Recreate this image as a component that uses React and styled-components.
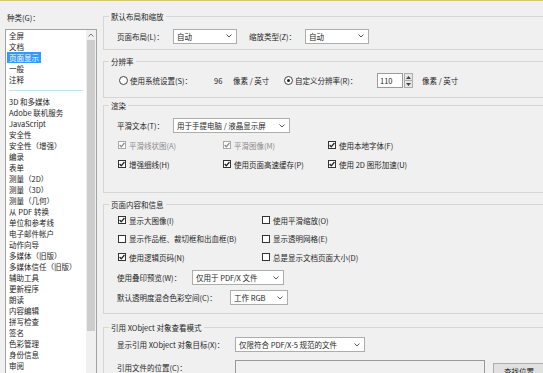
import React from 'react';
import styled, { createGlobalStyle } from 'styled-components';

const GlobalStyle = createGlobalStyle`
  html, body { margin: 0; padding: 0; background: #f0f0f0; overflow: hidden; }
  body {
    font-family: "Noto Sans CJK SC", "Noto Sans", sans-serif;
    font-size: 7.5px;
    color: #1e1e1e;
  }
`;

const Window = styled.div`
  width: 543px;
  height: 373px;
  box-sizing: border-box;
  border-top: 1px solid #d9c96c;
  display: flex;
  overflow: hidden;
  background: #f0f0f0;
`;

/* ---------- sidebar ---------- */
const Sidebar = styled.div`
  width: 103px;
  flex: none;
  display: flex;
  flex-direction: column;
  padding-left: 5px;
  box-sizing: border-box;
`;

const SideLabel = styled.div`
  height: 11px;
  line-height: 11px;
  margin: 11px 0 0 2px;
  white-space: nowrap;
`;

const ListBox = styled.div`
  margin-top: 6px;
  width: 92px;
  height: 380px;
  box-sizing: border-box;
  border: 1px solid #a3a3a3;
  background: #fff;
  display: flex;
  flex: none;
`;

const List = styled.div`
  flex: 1;
  min-width: 0;
  display: flex;
  flex-direction: column;
  align-items: flex-start;
  padding-left: 1px;
`;

const Item = styled.div`
  height: 11px;
  line-height: 11px;
  padding: 0 2px;
  white-space: nowrap;
  background: ${p => (p.$sel ? '#3399ff' : 'transparent')};
  color: ${p => (p.$sel ? '#fff' : '#1e1e1e')};
`;

const Sep = styled.div`
  height: 11px;
  align-self: stretch;
  display: flex;
  align-items: center;
  padding: 0 3px 0 2px;
  &::after {
    content: '';
    flex: 1;
    height: 1px;
    background: #c6e2f2;
  }
`;

const Scrollbar = styled.div`
  width: 10px;
  flex: none;
  background: #f0f0f0;
  display: flex;
  flex-direction: column;
  align-items: center;
`;

const ScrollArrow = styled.div`
  height: 10px;
  width: 10px;
  display: flex;
  align-items: center;
  justify-content: center;
`;

const Thumb = styled.div`
  width: 8px;
  height: 291px;
  background: #cdcdcd;
`;

/* ---------- main ---------- */
const Main = styled.div`
  flex: 1;
  min-width: 0;
  display: flex;
  flex-direction: column;
`;

const Group = styled.section`
  flex: none;
  width: 470px;
  height: ${p => p.$h}px;
  margin-top: ${p => p.$mt}px;
  box-sizing: border-box;
  border: 1px solid #d6d6d6;
  display: flex;
  flex-direction: column;
  padding-left: 13px;
`;

const Title = styled.div`
  width: fit-content;
  height: 11px;
  line-height: 11px;
  margin: -6px 0 0 -8px;
  padding: 0 2px;
  background: #f0f0f0;
  white-space: nowrap;
`;

const Row = styled.div`
  display: flex;
  align-items: ${p => (p.$top ? 'flex-start' : 'center')};
  height: ${p => p.$h}px;
  margin-top: ${p => p.$mt}px;
  flex: none;
`;

const Label = styled.div`
  width: ${p => p.$w}px;
  flex: none;
  white-space: nowrap;
  line-height: 11px;
  padding-top: ${p => p.$pt || 0}px;
  margin-left: ${p => p.$ml || 0}px;
`;

const Text = styled.div`
  width: ${p => p.$w}px;
  flex: none;
  white-space: nowrap;
  line-height: 11px;
`;

const SelectBox = styled.div`
  width: ${p => p.$w}px;
  height: 15px;
  flex: none;
  box-sizing: border-box;
  border: 1px solid #adadad;
  background: #fff;
  display: flex;
  align-items: center;
  justify-content: space-between;
  padding: 0 4px 0 3px;
  white-space: nowrap;
  line-height: 11px;
`;

const Grid = styled.div`
  display: grid;
  grid-template-columns: repeat(${p => p.$cols}, ${p => p.$cw}px);
  row-gap: ${p => p.$gap}px;
  margin-top: ${p => p.$mt}px;
  margin-left: 1px;
  flex: none;
`;

const CheckItem = styled.div`
  display: flex;
  align-items: center;
  height: 12px;
  line-height: 11px;
  white-space: nowrap;
  color: ${p => (p.$disabled ? '#8c8c8c' : '#1e1e1e')};
`;

const Box = styled.span`
  width: 8px;
  height: 8px;
  box-sizing: border-box;
  border: 1px solid ${p => (p.$disabled ? '#a8a8a8' : '#333')};
  background: #fff;
  margin-right: 3px;
  display: flex;
  align-items: center;
  justify-content: center;
  flex: none;
`;

const RadioItem = styled.div`
  width: ${p => p.$w}px;
  flex: none;
  display: flex;
  align-items: center;
  white-space: nowrap;
  line-height: 11px;
  margin-left: ${p => p.$ml || 0}px;
`;

const RadioCircle = styled.span`
  width: 9px;
  height: 9px;
  box-sizing: border-box;
  border-radius: 50%;
  border: 1px solid #444;
  background: #fff;
  margin-right: 2px;
  display: flex;
  align-items: center;
  justify-content: center;
  flex: none;
  &::after {
    content: '';
    width: 3px;
    height: 3px;
    border-radius: 50%;
    background: ${p => (p.$on ? '#222' : 'transparent')};
  }
`;

const NumInput = styled.div`
  width: 26px;
  height: 15px;
  box-sizing: border-box;
  border: 1px solid #9a9a9a;
  background: #fff;
  padding-left: 2px;
  line-height: 13px;
  flex: none;
`;

const Spin = styled.div`
  width: 9px;
  height: 15px;
  margin: 0 9px 0 1px;
  display: flex;
  flex-direction: column;
  flex: none;
  box-sizing: border-box;
  border: 1px solid #adadad;
  background: #e6e6e6;
`;

const SpinHalf = styled.div`
  flex: 1;
  display: flex;
  align-items: center;
  justify-content: center;
  border-top: ${p => (p.$down ? '1px solid #adadad' : 'none')};
`;

const TextField = styled.div`
  width: ${p => p.$w}px;
  height: 18px;
  box-sizing: border-box;
  border: 1px solid #9a9a9a;
  border-bottom: none;
  background: #f0f0f0;
  flex: none;
`;

const Button = styled.div`
  margin: 3px 0 0 8px;
  width: 62px;
  height: 16px;
  box-sizing: border-box;
  border: 1px solid #adadad;
  border-bottom: none;
  background: #e1e1e1;
  display: flex;
  align-items: center;
  justify-content: flex-start;
  flex: none;
  white-space: nowrap;
  line-height: 11px;
  padding-left: 10px;
`;

/* ---------- small drawings ---------- */
const Chevron = () => (
  <svg width="6" height="4" viewBox="0 0 6 4">
    <polyline points="0.5,0.5 3,3 5.5,0.5" fill="none" stroke="#555" strokeWidth="1" />
  </svg>
);

const UpChevron = () => (
  <svg width="6" height="4" viewBox="0 0 6 4">
    <polyline points="0.5,3.5 3,1 5.5,3.5" fill="none" stroke="#777" strokeWidth="1" />
  </svg>
);

const Tri = ({ down }) => (
  <svg width="5" height="3" viewBox="0 0 5 3">
    {down ? <polygon points="0,0 5,0 2.5,3" fill="#444" /> : <polygon points="0,3 5,3 2.5,0" fill="#444" />}
  </svg>
);

const CheckMark = ({ disabled }) => (
  <svg width="6" height="6" viewBox="0 0 6 6">
    <polyline points="0.6,3 2.3,4.8 5.4,1" fill="none" stroke={disabled ? '#8c8c8c' : '#222'} strokeWidth="1.3" />
  </svg>
);

const Check = ({ label, checked, disabled }) => (
  <CheckItem $disabled={disabled}>
    <Box $disabled={disabled}>{checked && <CheckMark disabled={disabled} />}</Box>
    {label}
  </CheckItem>
);

const Select = ({ w, children }) => (
  <SelectBox $w={w}>
    <span>{children}</span>
    <Chevron />
  </SelectBox>
);

const top = ['全屏', '文档', '页面显示', '一般', '注释'];
const rest = [
  '3D 和多媒体', 'Adobe 联机服务', 'JavaScript', '安全性', '安全性（增强）', '编录', '表单',
  '测量（2D）', '测量（3D）', '测量（几何）', '从 PDF 转换', '单位和参考线', '电子邮件帐户',
  '动作向导', '多媒体（旧版）', '多媒体信任（旧版）', '辅助工具', '更新程序', '朗读',
  '内容编辑', '拼写检查', '签名', '色彩管理', '身份信息', '审阅',
];

export default function App() {
  return (
    <>
      <GlobalStyle />
      <Window>
        <Sidebar>
          <SideLabel>种类(G)：</SideLabel>
          <ListBox>
            <List>
              {top.map(t => (
                <Item key={t} $sel={t === '页面显示'}>{t}</Item>
              ))}
              <Sep />
              {rest.map(t => (
                <Item key={t}>{t}</Item>
              ))}
            </List>
            <Scrollbar>
              <ScrollArrow><UpChevron /></ScrollArrow>
              <Thumb />
            </Scrollbar>
          </ListBox>
        </Sidebar>

        <Main>
          <Group $h={34} $mt={15}>
            <Title>默认布局和缩放</Title>
            <Row $h={16} $mt={6}>
              <Label $w={56}>页面布局(L)：</Label>
              <Select w={64}>自动</Select>
              <Label $w={56} $ml={12}>缩放类型(Z)：</Label>
              <Select w={64}>自动</Select>
            </Row>
          </Group>

          <Group $h={37} $mt={11}>
            <Title>分辨率</Title>
            <Row $h={15} $mt={6}>
              <RadioItem $w={95} $ml={2}><RadioCircle />使用系统设置(S)：</RadioItem>
              <Text $w={19}>96</Text>
              <Text $w={51}>像素 / 英寸</Text>
              <RadioItem $w={93}><RadioCircle $on />自定义分辨率(R)：</RadioItem>
              <NumInput>110</NumInput>
              <Spin>
                <SpinHalf><Tri /></SpinHalf>
                <SpinHalf $down><Tri down /></SpinHalf>
              </Spin>
              <Text $w={60}>像素 / 英寸</Text>
            </Row>
          </Group>

          <Group $h={88} $mt={7}>
            <Title>渲染</Title>
            <Row $h={15} $mt={7}>
              <Label $w={56}>平滑文本(T)：</Label>
              <Select w={117}>用于手提电脑 / 液晶显示屏</Select>
            </Row>
            <Grid $cols={3} $cw={105} $gap={7} $mt={6}>
              <Check label="平滑线状图(A)" checked disabled />
              <Check label="平滑图像(M)" checked disabled />
              <Check label="使用本地字体(F)" checked />
              <Check label="增强细线(H)" checked />
              <Check label="使用页面高速缓存(P)" checked />
              <Check label="使用 2D 图形加速(U)" checked />
            </Grid>
          </Group>

          <Group $h={110} $mt={11}>
            <Title>页面内容和信息</Title>
            <Grid $cols={2} $cw={144} $gap={6.5} $mt={4}>
              <Check label="显示大图像(I)" checked />
              <Check label="使用平滑缩放(O)" />
              <Check label="显示作品框、裁切框和出血框(B)" />
              <Check label="显示透明网格(E)" />
              <Check label="使用逻辑页码(N)" checked />
              <Check label="总是显示文档页面大小(D)" />
            </Grid>
            <Row $h={15} $mt={7}>
              <Label $w={75}>使用叠印预览(W)：</Label>
              <Select w={92}>仅用于 PDF/X 文件</Select>
            </Row>
            <Row $h={15} $mt={5}>
              <Label $w={113}>默认透明度混合色彩空间(C)：</Label>
              <Select w={58}>工作 RGB</Select>
            </Row>
          </Group>

          <Group $h={80} $mt={13}>
            <Title>引用 XObject 对象查看模式</Title>
            <Row $h={15} $mt={4}>
              <Label $w={118}>显示引用 XObject 对象目标(X)：</Label>
              <Select w={130}>仅限符合 PDF/X-5 规范的文件</Select>
            </Row>
            <Row $h={18} $mt={8} $top>
              <Label $w={118} $pt={2}>引用文件的位置(C)：</Label>
              <TextField $w={250} />
              <Button>查找位置...</Button>
            </Row>
          </Group>
        </Main>
      </Window>
    </>
  );
}
